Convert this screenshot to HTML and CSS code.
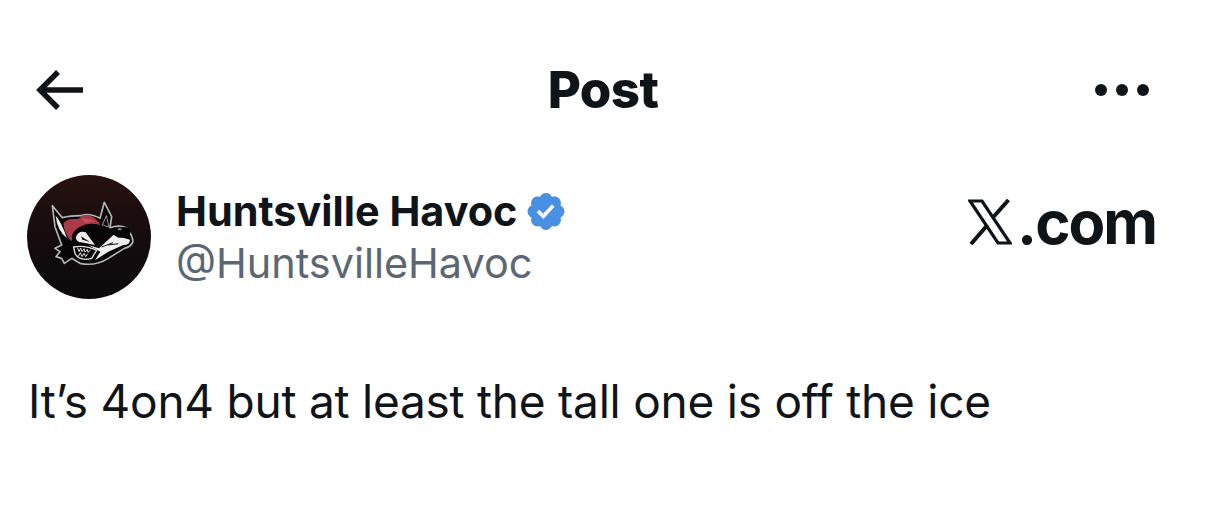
FILE: index.html
```html
<!DOCTYPE html>
<html lang="en">
<head>
<meta charset="utf-8">
<title>Post</title>
<link rel="stylesheet" href="styles.css">
</head>
<body>
<main class="page">
  <header class="topbar">
    <svg class="back" viewBox="0 0 48 42" aria-hidden="true"><path d="M48 21H5M23 3 5 21l18 18" fill="none" stroke="#0f1419" stroke-width="5.5"/></svg>
    <h1 class="title">Post</h1>
    <div class="more" aria-hidden="true"><span class="dot"></span><span class="dot"></span><span class="dot"></span></div>
  </header>
  <section class="author">
    <svg class="avatar" viewBox="-54 -60 372 372" aria-hidden="true">
      <defs>
        <linearGradient id="avatar-bg" x1="0" y1="0" x2="0" y2="1">
          <stop offset="0" stop-color="#27110f"/>
          <stop offset="0.5" stop-color="#150c0e"/>
          <stop offset="1" stop-color="#0c0a0b"/>
        </linearGradient>
      </defs>
      <circle cx="132" cy="126" r="186" fill="url(#avatar-bg)"/>
      <path d="M22 32 52 68Q75 62 108 62 132 52 165 70L178 22 200 65 195 98Q225 88 245 100 262 118 264 140 258 156 238 160L190 190Q150 215 105 205L80 190 58 205 50 190 33 185 45 170 30 160 50 150 30 95Z" fill="#080506" stroke="#b5b5b5" stroke-width="5" stroke-linejoin="round"/>
      <path d="M55 85Q65 70 90 72 105 72 110 62 135 55 155 75 163 83 166 90 130 80 105 95 85 105 80 125 85 142 75 135 58 115 55 85Z" fill="#a93a48"/>
      <path d="M110 70Q130 68 150 78L120 84Z" fill="#c4505c"/>
      <path d="M32 62Q48 78 66 130 36 105 32 62Z" fill="#f2f2f2"/>
      <path d="M92 128Q100 105 122 112L150 150 108 142Q95 140 92 128Z" fill="#ececec"/>
      <path d="M108 124 134 140 112 134Z" fill="#111"/>
      <path d="M130 150 162 160 205 120 255 134Q255 150 235 150L190 170 150 196 166 170Z" fill="#eeeeee"/>
      <path d="M170 156l34-13M190 150l30-4" stroke="#111" stroke-width="3" fill="none"/>
      <path d="M86 156Q120 150 155 166L140 190Q105 200 90 176Z" fill="#080506" stroke="#e2e2e2" stroke-width="4"/>
      <path d="M98 158l4 12 5-11 4 11 6-9 3 10 7-8 2 9 8-7M100 184l6-11 5 12 6-10 5 10 6-9" stroke="#e2e2e2" stroke-width="3" fill="none"/>
      <ellipse cx="232" cy="112" rx="25" ry="16" fill="#080506" transform="rotate(-8 232 112)"/>
      <ellipse cx="224" cy="103" rx="6" ry="3" fill="#8c8c8c"/>
      <path d="M184 62 192 96 172 90Q178 75 184 62Z" fill="#0b0708" stroke="#d6d6d6" stroke-width="2"/>
    </svg>
    <div class="names">
      <div class="name-row">
        <span class="name">Huntsville Havoc</span>
        <svg class="badge" viewBox="1.5 1.75 21 20.5" aria-hidden="true"><path d="M22.25 12c0-1.43-.88-2.67-2.19-3.34.46-1.39.2-2.9-.81-3.91s-2.52-1.27-3.91-.81c-.66-1.31-1.91-2.19-3.34-2.19s-2.67.88-3.33 2.19c-1.4-.46-2.91-.2-3.92.81s-1.26 2.52-.8 3.91c-1.31.67-2.2 1.91-2.2 3.34s.89 2.67 2.2 3.34c-.46 1.39-.21 2.9.8 3.91s2.52 1.26 3.91.81c.67 1.31 1.91 2.19 3.34 2.19s2.68-.88 3.34-2.19c1.39.45 2.9.2 3.91-.81s1.27-2.52.81-3.91c1.31-.67 2.19-1.91 2.19-3.34zm-11.71 4.2L6.8 12.46l1.41-1.42 2.26 2.26 4.8-5.23 1.47 1.36-6.2 6.77z" fill="#4a90e2"/></svg>
      </div>
      <div class="handle">@HuntsvilleHavoc</div>
    </div>
    <div class="site">
      <svg class="x-logo" viewBox="0 0 44 46" aria-hidden="true"><path d="M2 2h12l28 42H30Z" fill="none" stroke="#0f1419" stroke-width="3.2"/><path d="M40.5 1 24.5 19M19.5 26 3 45" fill="none" stroke="#0f1419" stroke-width="4"/></svg>
      <span class="site-text">.com</span>
    </div>
  </section>
  <p class="body-text">It’s 4on4 but at least the tall one is off the ice</p>
</main>
</body>
</html>
```
FILE: styles.css
```css
* { box-sizing: border-box; }
html, body { margin: 0; background: #fff; }
.page {
  width: 1206px;
  height: 507px;
  overflow: hidden;
  font-family: Inter, "Liberation Sans", sans-serif;
  color: #0f1419;
}
.topbar {
  display: grid;
  grid-template-columns: 1fr auto 1fr;
  align-items: center;
  height: 60px;
  margin-top: 60px;
  padding: 0 35px;
}
.back { width: 48px; height: 42px; display: block; }
.title { margin: 0; font-size: 51px; font-weight: 800; line-height: 60px; letter-spacing: -0.6px; }
.more { display: flex; gap: 9px; justify-self: end; margin-right: 22px; }
.dot { width: 12px; height: 12px; border-radius: 50%; background: #0f1419; }
.author {
  display: flex;
  align-items: flex-start;
  margin-top: 55px;
  padding: 0 50px 0 27px;
}
.avatar { width: 124px; height: 124px; display: block; flex: none; }
.names { margin-left: 25px; flex: 1; padding-top: 13px; }
.name-row { display: flex; align-items: center; gap: 9.5px; height: 46px; }
.name { font-size: 41.4px; font-weight: 700; line-height: 46px; }
.badge { width: 38px; height: 37px; display: block; }
.handle { font-size: 41.4px; line-height: 46px; color: #5b6873; margin-top: 6px; }
.site { display: flex; align-items: flex-end; gap: 5px; margin-top: 24px; }
.x-logo { width: 44px; height: 46px; display: block; }
.site-text { font-size: 60px; font-weight: 700; line-height: 46px; letter-spacing: -2px; }
.body-text { margin: 74px 0 0 28px; font-size: 46px; line-height: 56px; letter-spacing: -0.24px; white-space: nowrap; }
```
